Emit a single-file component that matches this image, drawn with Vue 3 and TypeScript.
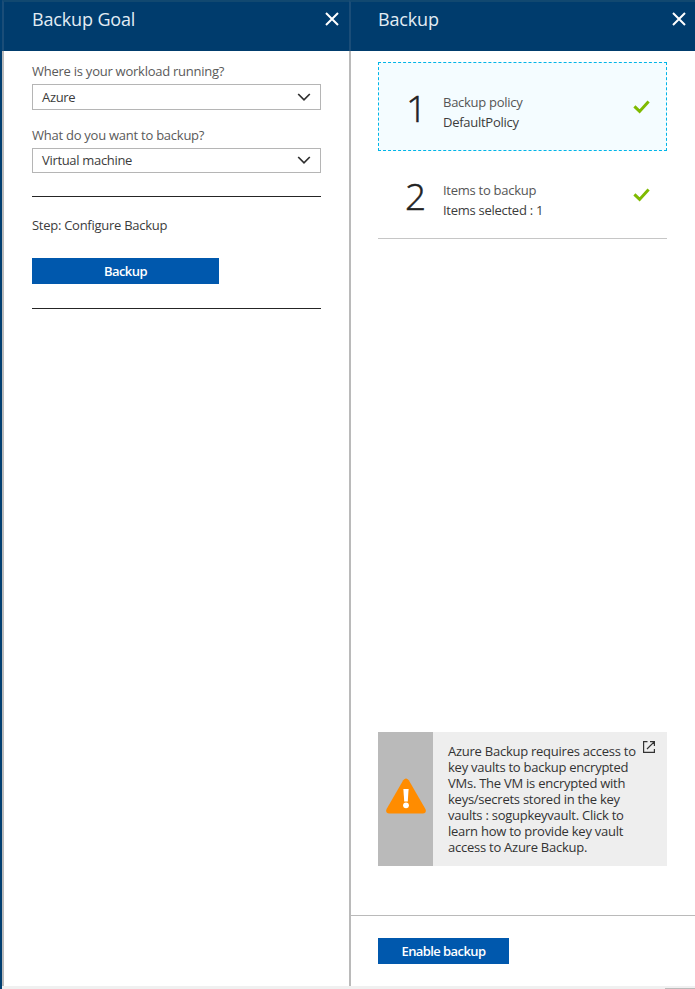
<script setup lang="ts">
interface Field { label: string; value: string }
interface Step { num: number; title: string; detail: string; active: boolean }

const fields: Field[] = [
  { label: 'Where is your workload running?', value: 'Azure' },
  { label: 'What do you want to backup?', value: 'Virtual machine' },
]
const steps: Step[] = [
  { num: 1, title: 'Backup policy', detail: 'DefaultPolicy', active: true },
  { num: 2, title: 'Items to backup', detail: 'Items selected : 1', active: false },
]
const warning: string = [
  'Azure Backup requires access to',
  'key vaults to backup encrypted',
  'VMs. The VM is encrypted with',
  'keys/secrets stored in the key',
  'vaults : sogupkeyvault. Click to',
  'learn how to provide key vault',
  'access to Azure Backup.',
].join('\n')
</script>

<template>
  <div class="portal">
    <div class="blades">
      <section class="blade goal">
        <header class="head">
          <h1>Backup Goal</h1>
          <svg class="close" width="14" height="14" viewBox="0 0 14 14"><path d="M1 1L13 13M13 1L1 13" /></svg>
        </header>
        <div class="body">
          <div v-for="f in fields" :key="f.label" class="field">
            <label>{{ f.label }}</label>
            <div class="select">
              <span>{{ f.value }}</span>
              <svg width="14" height="8" viewBox="0 0 14 8"><path d="M1.2 1L7 6.8L12.8 1" /></svg>
            </div>
          </div>
          <div class="step-box">
            <p>Step: Configure Backup</p>
            <button class="btn wide">Backup</button>
          </div>
        </div>
      </section>
      <section class="blade backup">
        <header class="head">
          <h1>Backup</h1>
          <svg class="close" width="14" height="14" viewBox="0 0 14 14"><path d="M1 1L13 13M13 1L1 13" /></svg>
        </header>
        <div class="body">
          <div v-for="s in steps" :key="s.num" class="step" :class="{ active: s.active }">
            <span class="num">{{ s.num }}</span>
            <div class="info">
              <div>{{ s.title }}</div>
              <div class="detail">{{ s.detail }}</div>
            </div>
            <svg class="check" width="17" height="14" viewBox="0 0 17 14"><path d="M1.4 6.4L6.6 11.4L15.6 1.6" /></svg>
          </div>
          <div class="notice">
            <div class="notice-icon">
              <svg width="40" height="36" viewBox="0 0 40 36">
                <path d="M17.2 2.2Q20 -1.4 22.8 2.2L39.4 31Q41 35.3 36.8 35.5H3.2Q-1 35.3 .6 31Z" fill="#ff8c00" />
                <path d="M17.4 11H22.6L21.8 23.4H18.2Z" fill="#fff" />
                <circle cx="20" cy="27.3" r="2.9" fill="#fff" />
              </svg>
            </div>
            <p class="notice-text">{{ warning }}</p>
            <svg class="external" width="12" height="12" viewBox="0 0 12 12"><path d="M4.5 .6H.6V11.4H11.4V8M7 .6H11.4V5M11.4 .6L4 8" /></svg>
          </div>
        </div>
        <footer><button class="btn">Enable backup</button></footer>
      </section>
    </div>
    <div class="scrollbar"><i></i></div>
  </div>
</template>

<style>
body { margin: 0; overflow: hidden; }
</style>

<style scoped>
* { box-sizing: border-box; }
.portal {
  width: 695px; height: 989px; display: flex; flex-direction: column;
  border-left: 2px solid #003e70; background: #fff;
  font: 13px/20px "Segoe UI", "Open Sans", "Noto Sans", sans-serif;
  letter-spacing: -0.27px; color: #3c3c3c;
}
.blades { display: flex; height: 986px; }
.blade { display: flex; flex-direction: column; }
.goal { width: 347px; }
.backup { width: 346px; }
.head {
  height: 51px; flex: none; display: flex; justify-content: space-between;
  background: #003c6d; border-top: 2px solid #114870; border-left: 2px solid #1a4d78;
  padding: 3px 10px 0 28px;
}
.backup .head { padding: 3px 10px 0 27px; }
h1 { margin: 0; font-size: 18px; font-weight: 400; line-height: 28px; letter-spacing: -0.15px; color: #e3ecf4; }
.close { margin-top: 7px; fill: none; stroke: #fff; stroke-width: 2; }
.backup .close { margin-right: -1px; }
.body { flex: 1; border-left: 2px solid #bababa; padding: 10px 28px 0; }
.backup .body { padding: 11px 28px 0 27px; display: flex; flex-direction: column; }
.field { height: 64px; }
.field + .field { height: 71px; }
.field + .field .select { height: 25px; padding-bottom: 1px; }
label { display: block; height: 20px; letter-spacing: -0.25px; color: #5a5a5a; }
.field .select {
  height: 26px; margin-top: 3px; border: 1px solid #b5b5b5; padding: 0 9px;
  display: flex; align-items: center; justify-content: space-between; letter-spacing: -0.32px;
}
.select svg { fill: none; stroke: #2f2f2f; stroke-width: 1.7; }
.step-box { border: solid #252525; border-width: 1px 0; height: 113px; padding-top: 18px; }
.step-box p { margin: 0 0 23px; }
.btn {
  display: block; width: 131px; height: 26px; border: 0; padding: 0; background: #0058ad; color: #fff;
  font: 600 13px/26px "Segoe UI", "Open Sans", sans-serif; letter-spacing: -0.58px;
}
.wide { width: 187px; }
.step { height: 88px; display: flex; align-items: flex-start; border-bottom: 1px solid #c6c6c6; }
.num {
  width: 65px; padding-left: 27px; margin-top: 20px; font-size: 37px; font-weight: 300; line-height: 50px;
  letter-spacing: 0; color: #222; -webkit-text-stroke: 0.5px #222;
}
.info { flex: 1; margin-top: 29px; color: #555; }
.detail { color: #3c3c3c; }
.step.active { height: 89px; border: 1px dashed #00b5e8; background: #f4fcff; }
.active .num { padding-left: 27px; width: 64px; }
.check { margin: 37px 17px 0 0; fill: none; stroke: #7fba00; stroke-width: 3; }
.active .check { margin-right: 16px; }
.notice { margin-top: auto; margin-bottom: 49px; height: 134px; display: flex; background: #eee; }
.notice-icon { width: 55px; background: #bababa; display: flex; align-items: center; justify-content: center; }
.notice-icon svg { margin-top: -6px; }
.notice-text { width: 193px; margin: 0; padding: 11px 0 0 15px; line-height: 16px; letter-spacing: -0.25px; white-space: pre; color: #333; }
.external { margin: 9px 0 0 17px; fill: none; stroke: #333; stroke-width: 1.2; }
footer { height: 71px; flex: none; border-left: 2px solid #bababa; border-top: 1px solid #bababa; padding: 22px 27px 0; }
.scrollbar { height: 3px; display: flex; justify-content: flex-end; align-items: flex-end; background: #f0f0f0; }
.scrollbar i { width: 30px; height: 1px; background: #bababa; }
</style>
